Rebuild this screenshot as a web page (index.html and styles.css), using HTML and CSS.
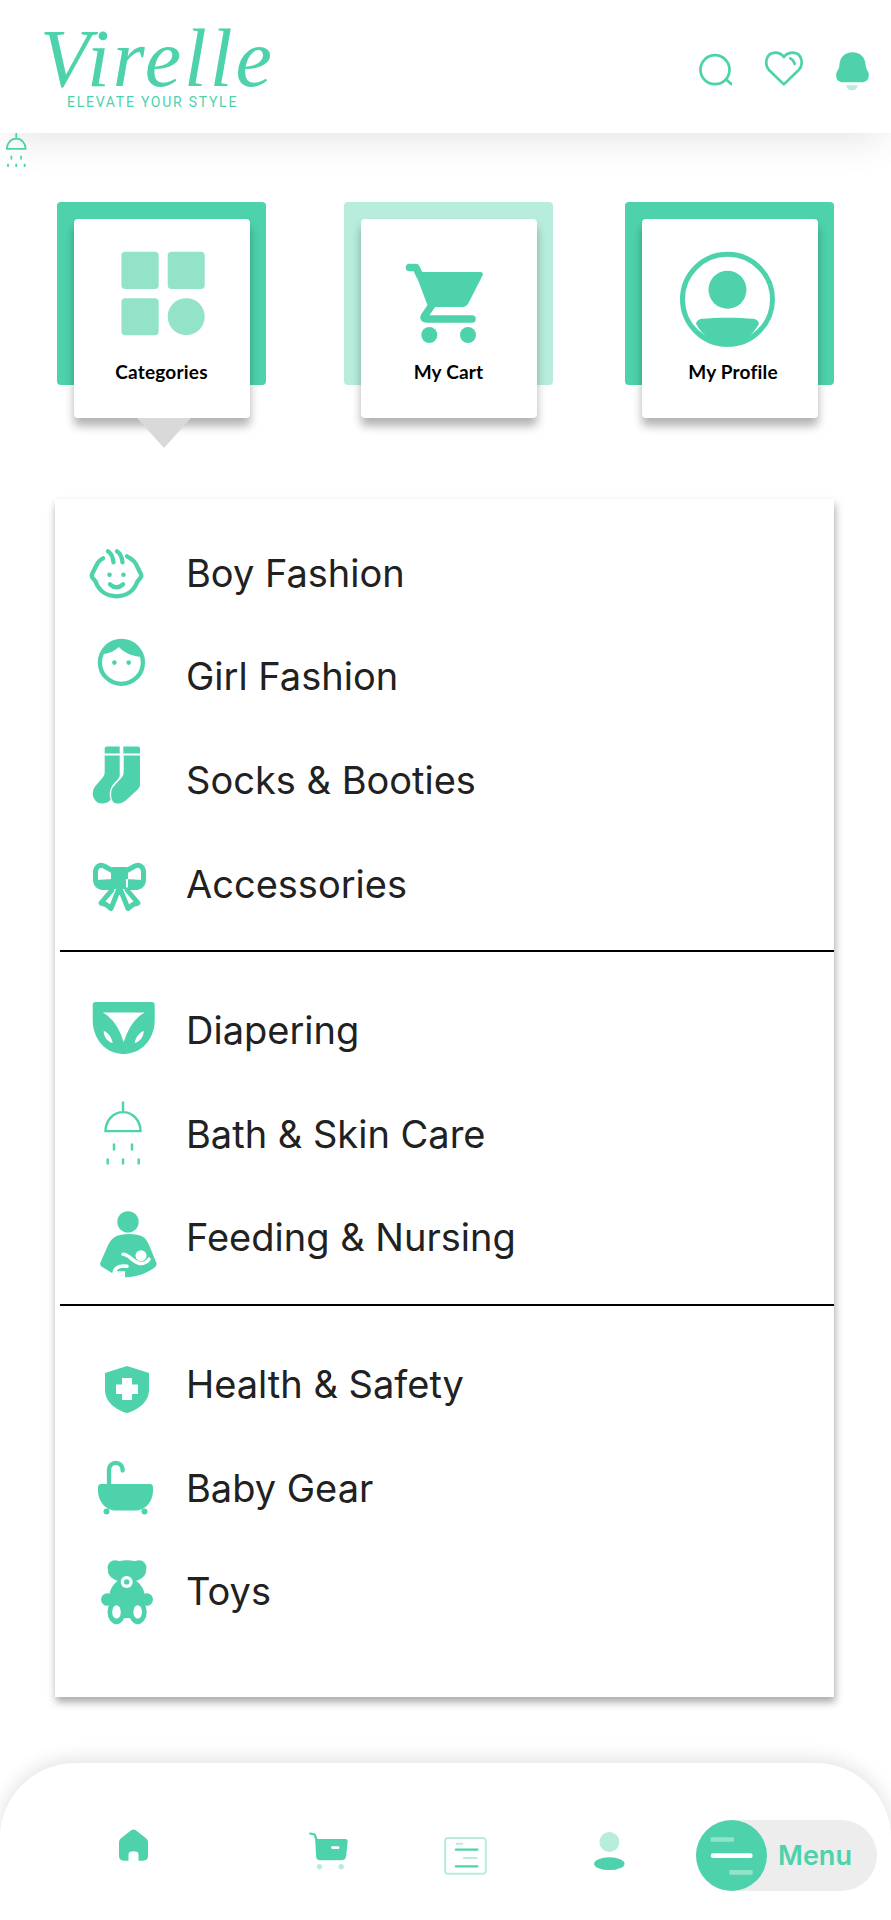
FILE: index.html
```html
<!DOCTYPE html>
<html lang="en">
<head>
    <meta charset="UTF-8">
    <meta name="viewport" content="width=device-width, initial-scale=1.0">
    <title>Virelle</title>
    <link rel="stylesheet" href="styles.css">
</head>
<body>
    <header class="top-bar">
        <div class="logo">
            <div class="logo-name">Virelle</div>
            <div class="logo-tag">ELEVATE YOUR STYLE</div>
        </div>
        <div class="top-icons">
            <svg width="33" height="35" viewBox="0 -2.7 33 35"><circle class="line" cx="16" cy="16" r="14.5"/><path class="line" d="M28 26.5L32.5 30.5"/></svg>
            <svg width="38" height="35" viewBox="0 0 38.3 35"><path class="line" d="M19 33.5L4 19C-1 13 1 2 10 1.5C14 1.5 17 3 19 6C21 3 24.5 1.5 28.5 1.5C37 2 39.5 13 34 19Z"/><path class="line" d="M25.5 7.3Q28.5 8.5 30 13"/></svg>
            <svg width="33" height="40" viewBox="0 -1.3 32.6 40"><path class="fill" d="M16.3 0C24 0 29 5 29.5 13Q29.7 16 31 18Q32.6 20 32.6 23C32.6 28 29 30 26 30H6.6C3 30 0 28 0 23Q0 20 1.6 18Q3 16 3.2 13C3.6 5 8.6 0 16.3 0Z"/><path class="pale" d="M10 33H21.6Q21 38 16 38Q10.5 38 10 33Z"/></svg>
        </div>
    </header>

    <svg class="stray-icon" viewBox="0 0 39 63">
        <path class="thin thick" d="M19 0V10M1.5 29.5A17.5 19 0 0 1 36.5 29.5ZM10 42V49M28 42V49M3.7 57V63M19 57V63M34.7 57V63"/>
    </svg>

    <section class="tiles">
        <div class="tile tile-active">
            <div class="card">
                <svg class="card-icon" viewBox="-9.4 -1.7 100 100">
                    <rect class="soft" width="37.3" height="37.3" rx="4"/>
                    <rect class="soft" x="46.3" width="37" height="37.3" rx="4"/>
                    <rect class="soft" y="46.6" width="37.3" height="37" rx="4"/>
                    <circle class="soft" cx="64.8" cy="65" r="18.5"/>
                </svg>
                <div class="card-label">Categories</div>
            </div>
        </div>
        <div class="tile tile-pale">
            <div class="card">
                <svg class="card-icon" viewBox="-7 -14 100 100">
                    <path class="line heavy" d="M3.5 3.500H10L14 12"/>
                    <path class="fill" d="M9 8H74Q78 8 76.500 11.500L62.500 39Q60.500 43 56 43H25Q22 43 21 40Z"/>
                    <path class="line heavy" d="M26 41L18.500 52Q17 55 21 55H66"/>
                    <circle class="fill" cx="23.300" cy="71" r="8"/>
                    <circle class="fill" cx="62" cy="71" r="8"/>
                </svg>
                <div class="card-label">My Cart</div>
            </div>
        </div>
        <div class="tile">
            <div class="card">
                <svg class="card-icon" viewBox="0 -1.8 100 100">
                    <circle class="line wide" cx="47.500" cy="47.500" r="45"/>
                    <circle class="fill" cx="47.500" cy="38" r="19"/>
                    <path class="fill" d="M16 72Q17 67.500 22 67C36 65.500 59 65.500 73 67Q78 67.500 79 72A46 46 0 0 1 47.500 95A46 46 0 0 1 16 72Z"/>
                </svg>
                <div class="card-label card-label-shift">My Profile</div>
            </div>
        </div>
    </section>

    <section class="menu-panel">
        <ul class="group group-first">
            <li class="row">
                <svg class="row-icon" viewBox="-15 -26.300 100 100">
                    <path class="line mid" d="M37 7C43 10 46 13 47.500 18L51 25Q52 27 50 29L47.500 32C44 42 36 47 26.500 47C17 47 9 42 5.500 32L3 29Q1 27 2 25L5.500 18C7 14 9 11 13 9"/>
                    <path class="line mid" d="M18 2C21 4 23 8 23.500 13M27 2C30 4 32 8 32.500 13M20 35Q26.500 41 33 35"/>
                    <circle class="fill" cx="19.500" cy="25.500" r="2.300"/>
                    <circle class="fill" cx="33.500" cy="25.500" r="2.300"/>
                </svg>
                <span>Boy Fashion</span>
            </li>
            <li class="row">
                <svg class="row-icon" viewBox="-22.700 -12.900 100 100">
                    <circle class="line mid" cx="23.700" cy="23.500" r="21.500"/>
                    <path class="fill" d="M4 15A21.500 21.500 0 0 1 43.500 18C34 17 27 14 21 8C17 12 11 15 4 15Z"/>
                    <circle class="fill" cx="16.700" cy="23.700" r="2.300"/>
                    <circle class="fill" cx="31" cy="23.700" r="2.300"/>
                </svg>
                <span>Girl Fashion</span>
            </li>
            <li class="row">
                <svg class="row-icon" viewBox="-17.700 -16.500 100 100">
                    <path class="fill" d="M14 0H27V7H12V2Q12 0 14 0ZM30.600 0H45Q47.300 0 47.300 2V7H30.600Z"/>
                    <path class="fill" d="M12 9H27V29C27 31 25 33 22 36C17 41 16 48 18 53C16 56 12 57 9 57C4 57 0 52 0 47C0 43 2 40 4 38L10 31Q12 29 12 26Z"/>
                    <path class="fill" d="M31 9H47.300V38Q47.300 41 45 43L33 54C30 56.500 27 57 24 57C20 57 18 52 18.500 47C18.500 44 19 42 21 40L29 31Q31 29 31 26Z"/>
                </svg>
                <span>Socks &amp; Booties</span>
            </li>
            <li class="row">
                <svg class="row-icon" viewBox="-18 -29 100 100">
                    <path class="line bow" d="M20 8L11 3C6 1 2.500 4 2.500 9V17C2.500 21 4 23 8 24M33 8L42 3C47 1 50.500 4 50.500 9V17C50.500 21 49 23 45 24"/>
                    <path class="fill" d="M20 4H33Q35 4 35 7V26H18V7Q18 4 20 4ZM3 17L20 16V27L9 27Q2 25 3 17ZM50 17L33 16V27L44 27Q51 25 50 17Z"/>
                    <path class="line bow" d="M19 27L8 40L13 41.500L18 45.500L25 28M34 27L45 40L40 41.500L35 45.500L28 28"/>
                </svg>
                <span>Accessories</span>
            </li>
        </ul>
        <hr class="divider">
        <ul class="group group-second">
            <li class="row">
                <svg class="row-icon" viewBox="-17.700 -22 100 100">
                    <path class="fill" fill-rule="evenodd" d="M3 0H59Q62 0 62 3V18C62 38 48 52 31 52C14 52 0 38 0 18V3Q0 0 3 0ZM10 10.500Q24 18 31 40Q38 18 52 10.500ZM11 29C11 35 15 40 20 41C19 35 15 30 11 29ZM51 29C47 30 43 35 42 41C47 40 51 35 51 29Z"/>
                </svg>
                <span>Diapering</span>
            </li>
            <li class="row">
                <svg class="row-icon" viewBox="-29 -17.600 100 100">
                    <path class="thin" d="M19 0V10M1.500 29.500A17.500 19 0 0 1 36.500 29.500ZM10 42V49M28 42V49M3.700 57V63M19 57V63M34.700 57V63"/>
                </svg>
                <span>Bath &amp; Skin Care</span>
            </li>
            <li class="row">
                <svg class="row-icon" viewBox="-25 -24.200 100 100">
                    <circle class="fill" cx="28" cy="10.700" r="10.700"/>
                    <path class="fill" d="M16 25C24 22 34 22 42 25C46 27 48 31 50 36L56.500 52Q57 54 55 56C47 62 37 66 25 66V60H14V63L1 55Q-.5 53 .5 51L8 34C10 30 12 27 16 25Z"/>
                    <circle class="knock" cx="41" cy="44.500" r="5.500"/>
                    <path class="knock-line" d="M23 43C29 43 32 50 39 52C43 53 47 51 49 48M14 62C15 56 20 54 27 55"/>
                </svg>
                <span>Feeding &amp; Nursing</span>
            </li>
        </ul>
        <hr class="divider">
        <ul class="group group-third">
            <li class="row">
                <svg class="row-icon" viewBox="-30 -32 100 100">
                    <path class="fill" fill-rule="evenodd" d="M22 0L44 7V24C44 36 33 44 22 47C11 44 0 36 0 24V7ZM17 12V18.500H11V28H17V34H27V28H33V18.500H27V12Z"/>
                </svg>
                <span>Health &amp; Safety</span>
            </li>
            <li class="row">
                <svg class="row-icon" viewBox="-23 -21.600 100 100">
                    <path class="line mid" d="M11 26V10A6.800 6.800 0 0 1 24.600 10V11"/>
                    <path class="fill" d="M3 24.500H52Q55 24.500 55 28V31C55 42 47 51 38 51H17C8 51 0 42 0 31V28Q0 24.500 3 24.500Z"/>
                    <circle class="fill" cx="8.500" cy="52" r="3"/>
                    <circle class="fill" cx="46.500" cy="52" r="3"/>
                </svg>
                <span>Baby Gear</span>
            </li>
            <li class="row">
                <svg class="row-icon" viewBox="-26 -19.200 100 100">
                    <circle class="fill" cx="14" cy="7.500" r="7.500"/>
                    <circle class="fill" cx="38" cy="7.500" r="7.500"/>
                    <ellipse class="fill" cx="26" cy="11" rx="19" ry="11"/>
                    <ellipse class="fill" cx="26" cy="38" rx="18" ry="20"/>
                    <circle class="fill" cx="6.300" cy="39.300" r="6.300"/>
                    <circle class="fill" cx="45.700" cy="39.300" r="6.300"/>
                    <ellipse class="fill" cx="15.500" cy="51.700" rx="9" ry="12.300"/>
                    <ellipse class="fill" cx="36.700" cy="51.700" rx="9" ry="12.300"/>
                    <circle class="knock" cx="25.700" cy="21.700" r="6"/>
                    <circle class="fill" cx="25.700" cy="21.700" r="2.700"/>
                    <ellipse class="knock" cx="15.500" cy="51.700" rx="4.300" ry="6.700"/>
                    <ellipse class="knock" cx="36.700" cy="51.700" rx="4.300" ry="6.700"/>
                </svg>
                <span>Toys</span>
            </li>
        </ul>
    </section>

    <nav class="bottom-nav">
        <svg width="29" height="71" viewBox="0 -9.300 29 71">
            <path class="fill" d="M12.500.8Q14.500-.4 16.500.8L27 9Q29 10.500 29 13V26.500Q29 31.400 24 31.400H19.500V25Q19.500 22 14.500 22Q9.500 22 9.500 25V31.400H5Q0 31.400 0 26.500V13Q0 10.500 2 9Z"/>
        </svg>
        <svg width="39" height="71" viewBox="0 -12 38.700 71">
            <path class="line slim" d="M1 1.500L5.500 2.500L7.500 8"/>
            <path class="fill" fill-rule="evenodd" d="M6 7H36Q38.700 7 38.500 10L37 24Q36.500 28.300 32 28.300H11Q7.500 28.300 7 25ZM23 14.300Q22 14.300 22 15.600Q22 17 23 17H29.300Q30.300 17 30.300 15.600Q30.300 14.300 29.300 14.300Z"/>
            <circle class="pale" cx="10.300" cy="34.700" r="2.700"/>
            <circle class="pale" cx="32" cy="34.700" r="2.700"/>
        </svg>
        <svg width="43" height="71" viewBox="0 -17 42.700 71">
            <rect class="pale-line" x="1" y="1" width="40.700" height="35.700" rx="3"/>
            <path class="pale-line" d="M11.700 6.700H19M19 21H33.300"/>
            <path class="line slim" d="M11.700 12.700H33.300M11.700 29.300H33.300"/>
        </svg>
        <svg width="31" height="71" viewBox="0 -12 30.300 71">
            <circle class="pale" cx="15" cy="10" r="10"/>
            <ellipse class="fill" cx="15" cy="31.700" rx="15.200" ry="6.400"/>
        </svg>
        <div class="menu-pill">
            <svg class="menu-circle" width="71" height="71" viewBox="0 0 71 71">
                <circle class="fill" cx="35.500" cy="35.500" r="35.500"/>
                <rect class="bar-soft" x="14.700" y="17.300" width="23.300" height="4.400" rx="1"/>
                <rect class="knock" x="14.700" y="33.300" width="42" height="4.700" rx="2.300"/>
                <rect class="bar-soft" x="33.300" y="50" width="23.400" height="4.700" rx="1"/>
            </svg>
            <span class="menu-text">Menu</span>
        </div>
    </nav>
</body>
</html>
```

FILE: styles.css
```css
body {
    font-family: "Inter", sans-serif;
    margin: 0;
    padding: 0;
    width: 891px;
    height: 1920px;
    overflow: hidden;
    background-color: #fff;
    position: relative;
}

/* svg paint */
.fill { fill: #4dd2ac; }
.pale { fill: #b8eddd; }
.soft { fill: #93e3c9; }
.knock { fill: #fff; }
.bar-soft { fill: #93e3c9; }
.line {
    fill: none;
    stroke: #4dd2ac;
    stroke-width: 2.7;
    stroke-linecap: round;
    stroke-linejoin: round;
}
.line.mid { stroke-width: 4.3; }
.line.bow { stroke-width: 5; }
.line.wide { stroke-width: 5; }
.line.heavy { stroke-width: 7.5; }
.line.slim { stroke-width: 2.2; }
.thin {
    fill: none;
    stroke: #4dd2ac;
    stroke-width: 2.4;
}
.thin.thick { stroke-width: 3.2; }
.pale-line {
    fill: none;
    stroke: #b8eddd;
    stroke-width: 2;
}
.knock-line {
    fill: none;
    stroke: #fff;
    stroke-width: 3.5;
    stroke-linecap: round;
}

.top-bar {
    height: 133px;
    display: flex;
    justify-content: space-between;
    background-color: #fff;
    box-shadow: 0 12px 40px -8px rgba(0, 0, 0, 0.12);
}
.logo {
    padding-left: 40px;
}
.logo-name {
    font-family: "Liberation Serif", serif;
    font-style: italic;
    font-size: 82px;
    line-height: 70px;
    height: 70px;
    padding-top: 24px;
    color: #4dd2ac;
    letter-spacing: 3px;
}
.logo-tag {
    font-family: "Roboto", sans-serif;
    font-size: 14px;
    line-height: 14px;
    letter-spacing: 1.75px;
    color: #4dd2ac;
    margin-top: 1px;
    padding-left: 27px;
}
.top-icons {
    display: flex;
    align-items: flex-start;
    gap: 33px;
    padding: 51px 22px 0 0;
}

.stray-icon {
    position: absolute;
    left: 6px;
    top: 133px;
    width: 21px;
    height: 34px;
}

.tiles {
    display: flex;
    padding: 69px 0 0 57px;
}
.tile {
    width: 176px;
    height: 150px;
    padding: 16.5px;
    background-color: #4dd2ac;
    border-radius: 4px;
    position: relative;
    margin-left: 72px;
}
.tile:first-child { margin-left: 0; }
.tile-pale {
    background-color: #b8eddd;
    margin-left: 78px;
}
.tile-active::after {
    content: "";
    position: absolute;
    left: 80px;
    top: 216px;
    border-top: 30px solid #d9d9d9;
    border-left: 27.5px solid transparent;
    border-right: 27.5px solid transparent;
}
.card {
    height: 199px;
    box-sizing: border-box;
    padding-top: 31px;
    background-color: #fff;
    border-radius: 4px;
    box-shadow: 0 8px 10px rgba(0, 0, 0, 0.3);
    display: flex;
    flex-direction: column;
    align-items: center;
}
.card-icon {
    width: 100px;
    height: 100px;
    overflow: visible;
}
.card-label {
    font-family: "Lato", sans-serif;
    font-weight: 700;
    font-size: 19px;
    line-height: 22px;
    letter-spacing: 0.2px;
    color: #000;
    margin-top: 11px;
}
.card-label-shift {
    padding-left: 7px;
}

.menu-panel {
    width: 779px;
    height: 1198px;
    box-sizing: border-box;
    margin: 114px 0 0 55px;
    background-color: #fff;
    box-shadow: 1px 5px 8px rgba(0, 0, 0, 0.35);
}
.group {
    list-style: none;
    margin: 0;
    padding: 0;
}
.group-first { padding: 22px 0 15px; }
.group-second { padding: 26px 0 15px; }
.group-third { padding: 26px 0 0; }
.row {
    height: 103.6px;
    display: flex;
    align-items: center;
    padding-left: 20px;
    font-size: 38px;
    color: #212121;
}
.row-icon {
    width: 100px;
    height: 100px;
    margin-right: 11px;
    overflow: visible;
    flex-shrink: 0;
}
.divider {
    height: 2px;
    margin: 0 0 0 5px;
    border: none;
    background-color: #000;
}

.bottom-nav {
    position: absolute;
    left: 0;
    right: 0;
    bottom: 0;
    height: 157px;
    box-sizing: border-box;
    padding: 57px 0 0 119px;
    display: grid;
    grid-template-columns: 190px 135px 150px 102px 181px;
    align-items: start;
    background-color: #fff;
    border-radius: 75px 75px 0 0;
    box-shadow: 0 -3px 20px rgba(0, 0, 0, 0.12);
}
.menu-pill {
    height: 71px;
    display: flex;
    align-items: center;
    background-color: #ededed;
    border-radius: 36px;
}
.menu-text {
    font-weight: 600;
    font-size: 27px;
    color: #4dd2ac;
    margin-left: 11px;
}
```
